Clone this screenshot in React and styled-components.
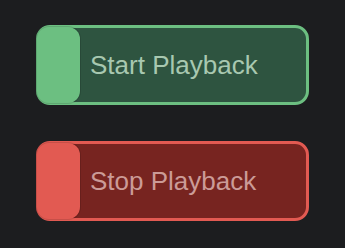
import React from "react";
import styled, { createGlobalStyle } from "styled-components";

const Global = createGlobalStyle`
  html, body { margin: 0; padding: 0; background: #1c1d1f; }
  body { font-family: "Liberation Sans", Arial, sans-serif; }
`;

const Page = styled.div`
  display: flex;
  flex-direction: column;
  gap: 36px;
  padding: 25px 0 0 36px;
  width: 345px;
  height: 248px;
  box-sizing: border-box;
`;

const Toggle = styled.button`
  display: flex;
  align-items: center;
  gap: 10px;
  width: 273px;
  height: 80px;
  box-sizing: border-box;
  padding: 0;
  border: 3px solid ${(p) => p.$edge};
  border-radius: 14px;
  background: ${(p) => p.$fill};
  font-family: inherit;
  cursor: pointer;
`;

const Knob = styled.span`
  flex: 0 0 43px;
  align-self: stretch;
  margin: -1px 0 -1px -2px;
  border-radius: 12px;
  background: ${(p) => p.$color};
  box-shadow: 0 0 0 1px rgba(0, 0, 0, 0.12);
`;

const Label = styled.span`
  font-size: 26px;
  line-height: 1;
  color: ${(p) => p.$color};
  white-space: nowrap;
`;

const buttons = [
  { label: "Start Playback", fill: "#2e5440", edge: "#6cbf81", knob: "#6cbf81", text: "#a8c8b0" },
  { label: "Stop Playback", fill: "#772420", edge: "#e25a52", knob: "#e25a52", text: "#cb9b97" },
];

export default function App() {
  return (
    <>
      <Global />
      <Page>
        {buttons.map((b) => (
          <Toggle key={b.label} $fill={b.fill} $edge={b.edge}>
            <Knob $color={b.knob} />
            <Label $color={b.text}>{b.label}</Label>
          </Toggle>
        ))}
      </Page>
    </>
  );
}
